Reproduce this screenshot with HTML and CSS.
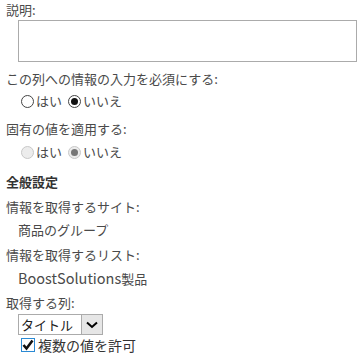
FILE: index.html
```html
<!DOCTYPE html>
<html lang="ja">
<head>
  <meta charset="UTF-8" />
  <title>列の設定</title>
  <link rel="stylesheet" href="styles.css">
</head>
<body>
  <div class="form">
    <div class="field-label first">説明:</div>
    <div class="textarea"></div>

    <div class="field-label gap-sm">この列への情報の入力を必須にする:</div>
    <div class="radio-row">
      <span class="radio"></span><span class="radio-text">はい</span>
      <span class="radio checked"></span><span class="radio-text">いいえ</span>
    </div>

    <div class="field-label gap-md">固有の値を適用する:</div>
    <div class="radio-row disabled">
      <span class="radio"></span><span class="radio-text">はい</span>
      <span class="radio checked"></span><span class="radio-text">いいえ</span>
    </div>

    <div class="section-title">全般設定</div>

    <div class="field-label gap-sm">情報を取得するサイト:</div>
    <div class="field-value">商品のグループ</div>

    <div class="field-label gap-sm">情報を取得するリスト:</div>
    <div class="field-value"><span class="latin">BoostSolutions</span>製品</div>

    <div class="field-label gap-sm">取得する列:</div>
    <div class="select">
      <span class="select-text">タイトル</span>
      <span class="select-arrow">
        <svg width="12" height="8" viewBox="0 0 12 8"><path d="M1 1.5 L6 6 L11 1.5" fill="none" stroke="#000" stroke-width="2"/></svg>
      </span>
    </div>
    <div class="check-row">
      <span class="checkbox">
        <svg width="12" height="12" viewBox="0 0 12 12"><path d="M1.5 6 L4.5 9.5 L10.5 1.5" fill="none" stroke="#111" stroke-width="2.6"/></svg>
      </span>
      <span class="check-text">複数の値を許可</span>
    </div>
  </div>
</body>
</html>
```

FILE: styles.css
```css
* {
  box-sizing: border-box;
}

body {
  margin: 0;
  background: #fff;
  color: #4a4a4a;
  font-family: "Noto Sans CJK JP", "Noto Sans", sans-serif;
  font-size: 13px;
  line-height: 16px;
}

.form {
  padding: 2px 6px 0 6px;
}

.field-label {
  height: 16px;
  white-space: nowrap;
}

.gap-sm {
  margin-top: 9px;
}

.gap-md {
  margin-top: 12px;
}

.textarea {
  margin: 2px 0 0 12px;
  width: 339px;
  height: 42px;
  border: 1px solid #ababab;
  background: #fff;
}

.radio-row {
  display: flex;
  align-items: center;
  height: 16px;
  margin-top: 6px;
  padding-left: 15px;
}

.radio-row.disabled {
  margin-top: 7px;
}

.radio {
  width: 13px;
  height: 13px;
  border: 1px solid #444;
  border-radius: 50%;
  background: #fff;
  position: relative;
}

.radio.checked::after {
  content: "";
  position: absolute;
  left: 2px;
  top: 2px;
  width: 7px;
  height: 7px;
  border-radius: 50%;
  background: #111;
}

.radio-text {
  margin: 0 6px 0 2px;
}

.disabled .radio {
  border-color: #c8c8c8;
  background: #ececec;
}

.disabled .radio.checked::after {
  background: #777;
}

.section-title {
  margin-top: 14px;
  height: 16px;
  font-weight: bold;
  color: #333;
}

.field-value {
  margin-top: 7px;
  padding-left: 12px;
  height: 16px;
  white-space: nowrap;
}

.latin {
  font-size: 14.5px;
}

.select {
  display: flex;
  margin: 3px 0 0 12px;
  width: 85px;
  height: 21px;
  border: 1px solid #ababab;
  background: #fff;
}

.select-text {
  flex: 1;
  padding-left: 2px;
  line-height: 19px;
  color: #222;
}

.select-arrow {
  width: 21px;
  border-left: 1px solid #ababab;
  background: #e6e6e6;
  display: flex;
  align-items: center;
  justify-content: center;
}

.check-row {
  display: flex;
  align-items: center;
  margin-top: 2px;
  padding-left: 15px;
  height: 16px;
}

.checkbox {
  width: 14px;
  height: 14px;
  border: 1px solid #2a8ad4;
  background: #fff;
  display: flex;
  align-items: center;
  justify-content: center;
}

.check-text {
  margin-left: 3px;
  font-size: 14px;
  color: #333;
}
```
